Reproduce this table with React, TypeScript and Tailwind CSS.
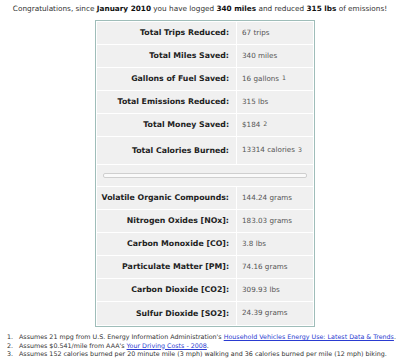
import React from "react";

type Row = { label: string; value: string; note?: string; h: string };

const savings: Row[] = [
  { label: "Total Trips Reduced:", value: "67 trips", h: "h-[22px]" },
  { label: "Total Miles Saved:", value: "340 miles", h: "h-[22px]" },
  { label: "Gallons of Fuel Saved:", value: "16 gallons", note: "1", h: "h-[22px]" },
  { label: "Total Emissions Reduced:", value: "315 lbs", h: "h-[22px]" },
  { label: "Total Money Saved:", value: "$184", note: "2", h: "h-[22px]" },
  { label: "Total Calories Burned:", value: "13314 calories", note: "3", h: "h-[27px]" },
];

const emissions: Row[] = [
  { label: "Volatile Organic Compounds:", value: "144.24 grams", h: "h-[22px]" },
  { label: "Nitrogen Oxides [NOx]:", value: "183.03 grams", h: "h-[22px]" },
  { label: "Carbon Monoxide [CO]:", value: "3.8 lbs", h: "h-[22px]" },
  { label: "Particulate Matter [PM]:", value: "74.16 grams", h: "h-[22px]" },
  { label: "Carbon Dioxide [CO2]:", value: "309.93 lbs", h: "h-[22px]" },
  { label: "Sulfur Dioxide [SO2]:", value: "24.39 grams", h: "h-[23px]" },
];

function StatRow({ row }: { row: Row }) {
  return (
    <div className={`grid grid-cols-[139px_1fr] gap-[1px] ${row.h}`}>
      <div className="bg-[#f0f0f0] flex items-center justify-end pr-[7px] font-bold text-[#222] text-[7.8px]">
        {row.label}
      </div>
      <div className="bg-[#f0f0f0] flex items-center pl-[5px] text-[#555] text-[7.2px]">
        {row.value}
        {row.note && <sup className="ml-[3px] text-[6.2px] relative -top-[1px]">{row.note}</sup>}
      </div>
    </div>
  );
}

export default function App() {
  return (
    <div className="w-[400px] h-[362px] bg-white overflow-hidden font-['DejaVu_Sans',Verdana,sans-serif] text-[#333]">
      <p className="pt-[4px] h-[20px] text-center text-[7.3px] leading-[10px] whitespace-nowrap">
        Congratulations, since <b className="text-[#111]">January 2010</b> you have logged{" "}
        <b className="text-[#111]">340 miles</b> and reduced <b className="text-[#111]">315 lbs</b> of emissions!
      </p>

      <div className="ml-[95px] w-[220px] border border-[#9fbdb9] bg-white p-[1px] flex flex-col gap-[1px]">
        {savings.map((r) => (
          <StatRow key={r.label} row={r} />
        ))}
        <div className="h-[21px] bg-[#f0f0f0] flex items-center px-[6px]">
          <div className="w-full h-[5px] bg-[#fafafa] border border-[#cfcfcf] rounded-[2px]" />
        </div>
        {emissions.map((r) => (
          <StatRow key={r.label} row={r} />
        ))}
      </div>

      <ol className="mt-[6px] text-[6.35px] leading-[8.5px] text-[#333] whitespace-nowrap">
        <li className="flex">
          <span className="w-[19px] pl-[7px]">1.</span>
          <span>
            Assumes 21 mpg from U.S. Energy Information Administration's{" "}
            <a className="text-[#2a3bd1] underline">Household Vehicles Energy Use: Latest Data &amp; Trends</a>.
          </span>
        </li>
        <li className="flex">
          <span className="w-[19px] pl-[7px]">2.</span>
          <span>
            Assumes $0.541/mile from AAA's <a className="text-[#2a3bd1] underline">Your Driving Costs - 2008</a>.
          </span>
        </li>
        <li className="flex">
          <span className="w-[19px] pl-[7px]">3.</span>
          <span>
            Assumes 152 calories burned per 20 minute mile (3 mph) walking and 36 calories burned per mile (12 mph) biking.
          </span>
        </li>
      </ol>
    </div>
  );
}
